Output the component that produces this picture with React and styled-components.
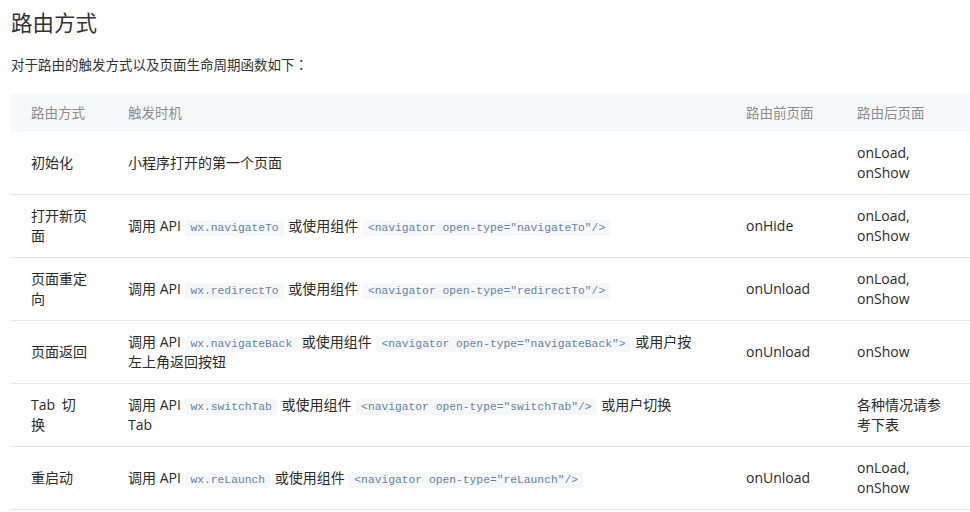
import React from "react";
import styled, { createGlobalStyle } from "styled-components";

const Global = createGlobalStyle`
  html, body { margin: 0; padding: 0; background: #fff; }
  body {
    font-family: "Open Sans", "Noto Sans CJK SC", sans-serif;
    color: #333;
    -webkit-font-smoothing: antialiased;
  }
`;

const Page = styled.div`
  padding: 0 0 0 11px;
  width: 959px;
`;

const Title = styled.h2`
  margin: 0;
  padding-top: 8px;
  font-size: 21.5px;
  line-height: 30px;
  font-weight: 400;
  color: #333;
`;

const Lead = styled.p`
  margin: 0;
  padding-top: 16px;
  font-size: 13.5px;
  line-height: 20px;
  color: #333;
`;

const Punct = styled.span`
  font-family: "Noto Sans CJK TC", sans-serif;
`;

const Table = styled.table`
  margin-top: 19px;
  width: 959px;
  border-collapse: collapse;
  table-layout: fixed;
  font-size: 14px;
`;

const HeadRow = styled.tr`
  background: #f7f8fa;
`;

const Th = styled.th`
  text-align: left;
  font-weight: 400;
  color: #8c8c8c;
  padding: 9px 20px;
  line-height: 20px;
  font-size: 13.5px;
`;

const Row = styled.tr`
  border-bottom: 1px solid #e8e8e8;
`;

const Td = styled.td`
  padding: 11px ${(p) => (p.$wide ? "30px" : "20px")} 11px 20px;
  line-height: 20px;
  height: 40px;
  vertical-align: middle;
  color: #2a2a2a;
  word-break: break-word;
  word-spacing: ${(p) => (p.$first ? "3px" : "normal")};
`;

const Code = styled.code`
  font-family: Consolas, "Liberation Mono", monospace;
  font-size: 11.3px;
  line-height: 16px;
  color: #6384ab;
  background: #f5f7f9;
  padding: 2px 5px;
  margin: 0 1px;
  border-radius: 2px;
`;

const rows = [
  { type: "初始化", trigger: ["小程序打开的第一个页面"], before: "", after: "onLoad, onShow" },
  {
    type: "打开新页面",
    trigger: ["调用 API ", { c: "wx.navigateTo" }, " 或使用组件 ", { c: '<navigator open-type="navigateTo"/>' }],
    before: "onHide",
    after: "onLoad, onShow",
  },
  {
    type: "页面重定向",
    trigger: ["调用 API ", { c: "wx.redirectTo" }, " 或使用组件 ", { c: '<navigator open-type="redirectTo"/>' }],
    before: "onUnload",
    after: "onLoad, onShow",
  },
  {
    type: "页面返回",
    trigger: ["调用 API ", { c: "wx.navigateBack" }, " 或使用组件 ", { c: '<navigator open-type="navigateBack">' }, " 或用户按左上角返回按钮"],
    before: "onUnload",
    after: "onShow",
  },
  {
    type: "Tab 切换",
    trigger: ["调用 API ", { c: "wx.switchTab" }, " 或使用组件 ", { c: '<navigator open-type="switchTab"/>' }, " 或用户切换 Tab"],
    before: "",
    after: "各种情况请参考下表",
  },
  {
    type: "重启动",
    trigger: ["调用 API ", { c: "wx.reLaunch" }, " 或使用组件 ", { c: '<navigator open-type="reLaunch"/>' }],
    before: "onUnload",
    after: "onLoad, onShow",
  },
];

export default function App() {
  return (
    <Page>
      <Global />
      <Title>路由方式</Title>
      <Lead>
        对于路由的触发方式以及页面生命周期函数如下<Punct>：</Punct>
      </Lead>
      <Table>
        <colgroup>
          <col style={{ width: 97 }} />
          <col style={{ width: 618 }} />
          <col style={{ width: 111 }} />
          <col style={{ width: 133 }} />
        </colgroup>
        <thead>
          <HeadRow>
            <Th>路由方式</Th>
            <Th>触发时机</Th>
            <Th>路由前页面</Th>
            <Th>路由后页面</Th>
          </HeadRow>
        </thead>
        <tbody>
          {rows.map((r, i) => (
            <Row key={i}>
              <Td $first>{r.type}</Td>
              <Td $wide>
                {r.trigger.map((t, j) =>
                  typeof t === "string" ? <React.Fragment key={j}>{t}</React.Fragment> : <Code key={j}>{t.c}</Code>
                )}
              </Td>
              <Td>{r.before}</Td>
              <Td>{r.after}</Td>
            </Row>
          ))}
        </tbody>
      </Table>
    </Page>
  );
}
